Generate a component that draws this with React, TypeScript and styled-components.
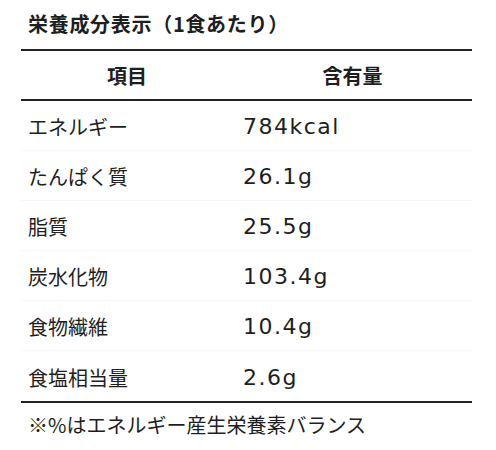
import * as React from "react";
import styled, { createGlobalStyle } from "styled-components";

const GlobalStyle = createGlobalStyle`
  html, body {
    margin: 0;
    padding: 0;
    background: #ffffff;
  }
  body {
    font-family: "Noto Sans CJK JP", "Noto Sans", sans-serif;
    color: #1e1e1e;
  }
  * {
    box-sizing: border-box;
  }
`;

const Wrapper = styled.div`
  width: 496px;
  height: 450px;
  padding: 10px 24px 0 21px;
`;

const Title = styled.h2`
  margin: 0 0 0 7px;
  height: 39px;
  font-size: 20px;
  font-weight: 700;
  line-height: 28px;
  letter-spacing: 0.7px;
`;

const Table = styled.div`
  display: grid;
  grid-template-columns: 212px 1fr;
  border-top: 2px solid #222;
  border-bottom: 2px solid #222;
`;

const HeadCell = styled.div`
  height: 50px;
  display: flex;
  align-items: center;
  justify-content: center;
  font-size: 20px;
  font-weight: 700;
  border-bottom: 2px solid #222;
`;

const Cell = styled.div<{ $value?: boolean; $last?: boolean }>`
  height: 50px;
  display: flex;
  align-items: center;
  padding-top: 2px;
  padding-left: ${({ $value }) => ($value ? "10px" : "7px")};
  border-bottom: ${({ $last }) => ($last ? "none" : "1px solid #f7f7f7")};
  font-size: ${({ $value }) => ($value ? "22px" : "20px")};
  font-family: ${({ $value }) =>
    $value ? '"DejaVu Sans", sans-serif' : "inherit"};
  letter-spacing: ${({ $value }) => ($value ? "1.5px" : "0")};
`;

const Note = styled.p`
  margin: 8px 0 0 7px;
  font-size: 20px;
  line-height: 28px;
`;

const rows = [
  { label: "エネルギー", value: "784kcal" },
  { label: "たんぱく質", value: "26.1g" },
  { label: "脂質", value: "25.5g" },
  { label: "炭水化物", value: "103.4g" },
  { label: "食物繊維", value: "10.4g" },
  { label: "食塩相当量", value: "2.6g" },
];

export default function App() {
  return (
    <>
      <GlobalStyle />
      <Wrapper>
        <Title>栄養成分表示（1食あたり）</Title>
        <Table>
          <HeadCell>項目</HeadCell>
          <HeadCell>含有量</HeadCell>
          {rows.map((r, i) => (
            <React.Fragment key={r.label}>
              <Cell $last={i === rows.length - 1}>{r.label}</Cell>
              <Cell $value $last={i === rows.length - 1}>
                {r.value}
              </Cell>
            </React.Fragment>
          ))}
        </Table>
        <Note>※%はエネルギー産生栄養素バランス</Note>
      </Wrapper>
    </>
  );
}
